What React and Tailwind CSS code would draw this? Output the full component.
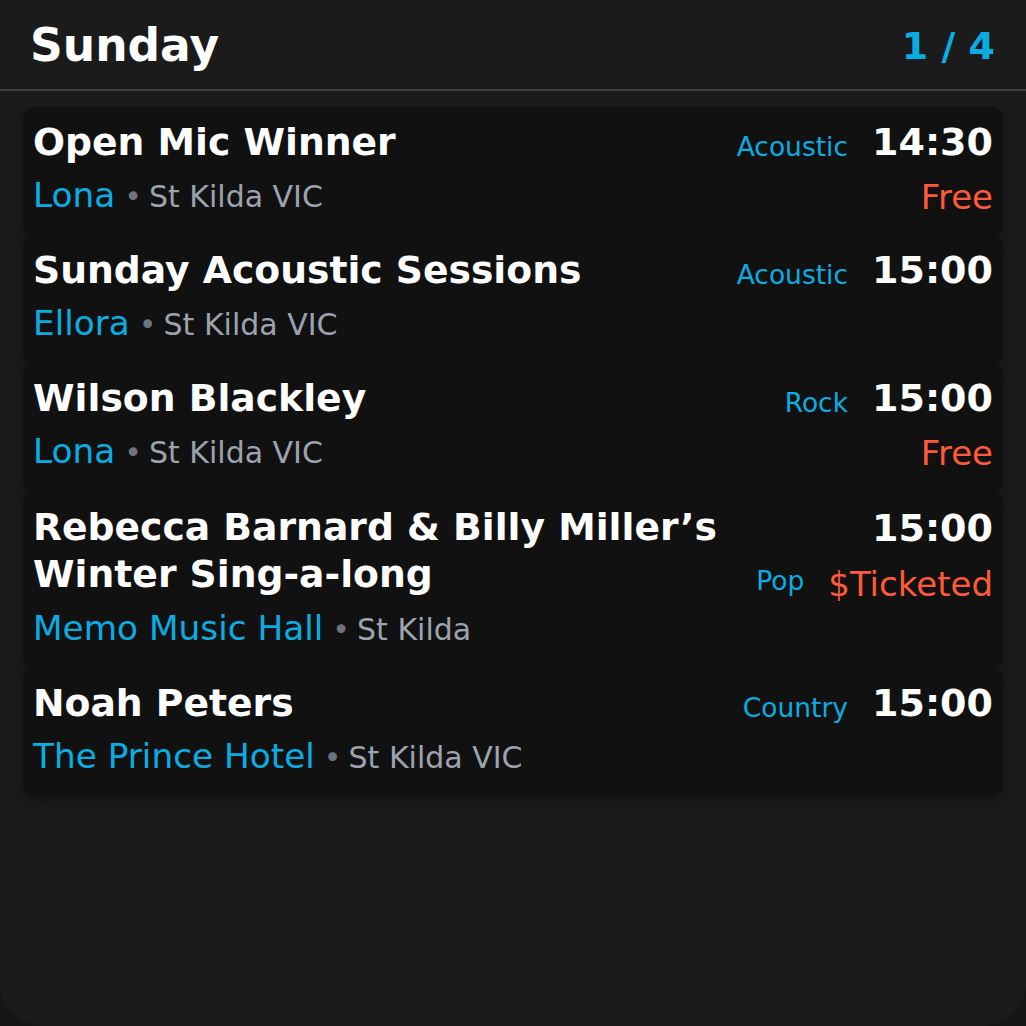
import React from "react";

const events = [
  { title: ["Open Mic Winner"], venue: "Lona", suburb: "St Kilda VIC", genre: "Acoustic", time: "14:30", price: "Free" },
  { title: ["Sunday Acoustic Sessions"], venue: "Ellora", suburb: "St Kilda VIC", genre: "Acoustic", time: "15:00" },
  { title: ["Wilson Blackley"], venue: "Lona", suburb: "St Kilda VIC", genre: "Rock", time: "15:00", price: "Free" },
  { title: ["Rebecca Barnard & Billy Miller\u2019s", "Winter Sing-a-long"], venue: "Memo Music Hall", suburb: "St Kilda", genre: "Pop", time: "15:00", price: "$Ticketed", split: true },
  { title: ["Noah Peters"], venue: "The Prince Hotel", suburb: "St Kilda VIC", genre: "Country", time: "15:00" },
];

function Card({ e }) {
  return (
    <div className="flex justify-between rounded-[12px] bg-[#111111] px-[10px] pt-3 pb-4 shadow-[0_6px_16px_rgba(0,0,0,0.3)]">
      <div className="flex flex-col gap-2 min-w-0">
        <div className={`text-[37.7px] font-bold text-white ${e.split ? "leading-[47px] pt-[1px]" : "leading-[46px]"}`}>
          {e.title.map((t, i) => (
            <div key={i}>{t}</div>
          ))}
        </div>
        <div className="flex items-baseline leading-[44px] whitespace-nowrap">
          <span className="text-[34.3px] text-[#0aade2]">{e.venue}</span>
          <span className="text-[30px] text-[#6b7280] ml-[9px]">•</span>
          <span className="text-[30px] text-[#9ca3af] ml-[7px]">{e.suburb}</span>
        </div>
      </div>
      <div className="flex flex-col items-end gap-2 shrink-0 pl-8">
        {e.split ? (
          <>
            <div className="text-[38px] leading-[46px] font-bold text-white pt-[2px]">{e.time}</div>
            <div className="flex items-center gap-6 leading-[44px]">
              <span className="text-[26.5px] text-[#0aade2] mb-[6px]">{e.genre}</span>
              <span className="text-[34px] text-[#fe5a37]">{e.price}</span>
            </div>
          </>
        ) : (
          <>
            <div className="flex items-baseline gap-6 leading-[46px]">
              <span className="text-[26.5px] text-[#0aade2] relative top-[1px]">{e.genre}</span>
              <span className="text-[38px] font-bold text-white">{e.time}</span>
            </div>
            {e.price && (
              <div className="text-[34px] leading-[44px] text-[#fe5a37] -mt-[2px]">{e.price}</div>
            )}
          </>
        )}
      </div>
    </div>
  );
}

export default function App() {
  return (
    <div className="w-[1026px] h-[1026px] bg-[#161616]" style={{ fontFamily: '"DejaVu Sans", sans-serif' }}>
      <div className="h-full bg-[#1b1b1b] rounded-b-[44px] flex flex-col">
        <div className="h-[91px] flex items-center justify-between pl-[30px] pr-[31px] pt-[3px] border-b-2 border-[#3a3f48]">
          <div className="text-[45.5px] font-bold text-white">Sunday</div>
          <div className="text-[38px] font-bold text-[#0aade2]">1 / 4</div>
        </div>
        <div className="flex flex-col px-[23px] pt-4">
          {events.map((e, i) => (
            <Card key={i} e={e} />
          ))}
        </div>
      </div>
    </div>
  );
}
